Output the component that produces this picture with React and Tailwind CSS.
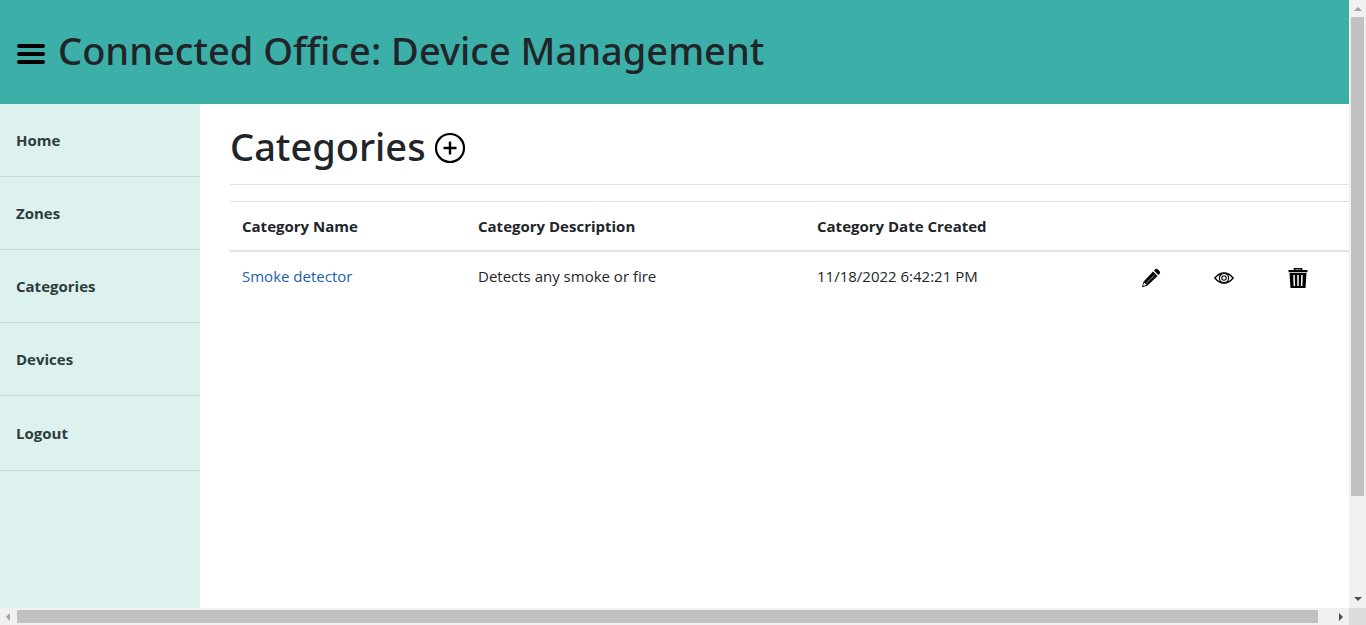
import React from "react";

const links = ["Home", "Zones", "Categories", "Devices"];

function MenuIcon() {
  return (
    <svg viewBox="0 0 30 24" className="h-6 w-[30px]" aria-hidden="true">
      <path d="M3 4h24M3 12h24M3 20h24" stroke="#000" strokeWidth="4" strokeLinecap="round" />
    </svg>
  );
}

function AddIcon() {
  return (
    <svg viewBox="0 0 32 32" className="size-8" fill="none" stroke="#000" aria-hidden="true">
      <circle cx="16" cy="16" r="14" strokeWidth="2.2" />
      <path d="M16 9.5v13M9.5 16h13" strokeWidth="2.4" />
    </svg>
  );
}

function PencilIcon() {
  return (
    <svg viewBox="0 0 20 20" className="size-5" aria-hidden="true">
      <path d="M12 3.600l4.500 4.500L6.300 17.800 1 19.300l1.500-5.600z" fill="#000" />
      <path d="M13 2.600l1.500-1.500q1-.8 2 0l2.300 2.300q.8 1 0 2l-1.500 1.500z" fill="#000" />
      <path d="M5.200 15.200l8.600-8.400" stroke="#fff" strokeWidth=".6" />
      <path d="M3.200 14.600l2.300 2.300-2.800.9-.5-.5z" fill="#fff" />
    </svg>
  );
}

function EyeIcon() {
  return (
    <svg viewBox="0 0 20 12" className="h-3 w-5" fill="none" stroke="#000" aria-hidden="true">
      <path d="M.8 6Q5 1 10 1t9.200 5Q15 11 10 11T.8 6z" strokeWidth="1.300" />
      <circle cx="10" cy="6" r="4.600" strokeWidth="1.200" />
      <circle cx="10" cy="6" r="2.200" strokeWidth="1.100" />
    </svg>
  );
}

function TrashIcon() {
  return (
    <svg viewBox="0 0 20 20" className="size-5" aria-hidden="true">
      <path d="M6.500 2V.8h7V2" fill="none" stroke="#000" strokeWidth="1.500" />
      <path d="M.5 2h19v2.200H.5zM1.500 5h17l-1 15h-15z" fill="#000" />
      <path d="M6 7l.4 11M10 7v11M14 7l-.4 11" stroke="#fff" strokeWidth="1.500" />
    </svg>
  );
}

function Arrow({ d }) {
  return (
    <svg viewBox="0 0 17 17" className="size-[17px] shrink-0" aria-hidden="true">
      <path d={d} fill="currentColor" />
    </svg>
  );
}

export default function App() {
  return (
    <div className="grid h-screen grid-cols-[minmax(0,1fr)_17px] grid-rows-[minmax(0,1fr)_17px] bg-white font-['Open_Sans','Noto_Sans',sans-serif] text-[15px] leading-6 text-[#212529]">
      <div className="flex min-h-0 flex-col overflow-hidden">
        <header className="flex h-[104px] shrink-0 items-center gap-3 bg-[#3dafa9] px-4 pb-1">
          <button type="button" aria-label="Toggle menu" className="mt-2">
            <MenuIcon />
          </button>
          <h1 className="font-['Noto_Sans',sans-serif] text-[38px] leading-12 font-medium whitespace-nowrap">
            Connected Office: Device Management
          </h1>
        </header>
        <div className="flex min-h-0 flex-1">
          <nav className="w-[200px] shrink-0 bg-[#ddf2ef] font-bold text-[#2e3b3d]">
            {links.map((name) => (
              <a key={name} href="#" className="block border-b border-[#c3d9da] px-4 py-6">
                {name}
              </a>
            ))}
            <button type="button" className="block w-full border-b border-[#c3d9da] px-4 py-[25px] text-left">
              Logout
            </button>
          </nav>
          <main className="min-w-0 flex-1 pt-[18px] pl-[30px]">
            <div className="flex gap-2">
              <h2 className="font-['Noto_Sans',sans-serif] text-[38px] leading-12 font-medium">Categories</h2>
              <a href="#" aria-label="Add category" className="mt-2.5">
                <AddIcon />
              </a>
            </div>
            <hr className="mt-3.5 mb-4 border-[#e2e3e4]" />
            <table className="w-full table-fixed border-collapse text-left">
              <colgroup>
                <col className="w-[236px]" />
                <col className="w-[339px]" />
                <col />
                <col className="w-[73px]" />
                <col className="w-[74px]" />
                <col className="w-[73px]" />
              </colgroup>
              <thead>
                <tr className="border-t border-b-2 border-[#dee2e6]">
                  <th className="p-3 font-bold">Category Name</th>
                  <th className="p-3 font-bold">Category Description</th>
                  <th className="p-3 font-bold">Category Date Created</th>
                  <th></th>
                  <th></th>
                  <th></th>
                </tr>
              </thead>
              <tbody>
                <tr>
                  <td className="p-3">
                    <a href="#" className="text-[#1b5fb5]">Smoke detector</a>
                  </td>
                  <td className="p-3">Detects any smoke or fire</td>
                  <td className="p-3">11/18/2022 6:42:21 PM</td>
                  <td className="px-3 pt-1">
                    <a href="#" aria-label="Edit" className="flex"><PencilIcon /></a>
                  </td>
                  <td className="px-3 pt-1">
                    <a href="#" aria-label="View" className="flex"><EyeIcon /></a>
                  </td>
                  <td className="px-3 pt-1">
                    <a href="#" aria-label="Delete" className="flex"><TrashIcon /></a>
                  </td>
                </tr>
              </tbody>
            </table>
          </main>
        </div>
      </div>
      <div className="flex flex-col items-center bg-[#f1f1f1]">
        <span className="text-[#a3a3a3]"><Arrow d="M5 11l4-4 4 4z" /></span>
        <div className="w-[13px] flex-[479] bg-[#c1c1c1]" />
        <div className="flex-[95]" />
        <span className="text-[#505050]"><Arrow d="M5 6l4 4 4-4z" /></span>
      </div>
      <div className="flex items-center bg-[#f1f1f1]">
        <span className="text-[#a3a3a3]"><Arrow d="M10 5L6 9l4 4z" /></span>
        <div className="h-[13px] flex-1 bg-[#c1c1c1]" />
        <div className="w-3.5" />
        <span className="text-[#505050]"><Arrow d="M7 5l4 4-4 4z" /></span>
      </div>
      <div className="bg-[#dcdcdc]" />
    </div>
  );
}
